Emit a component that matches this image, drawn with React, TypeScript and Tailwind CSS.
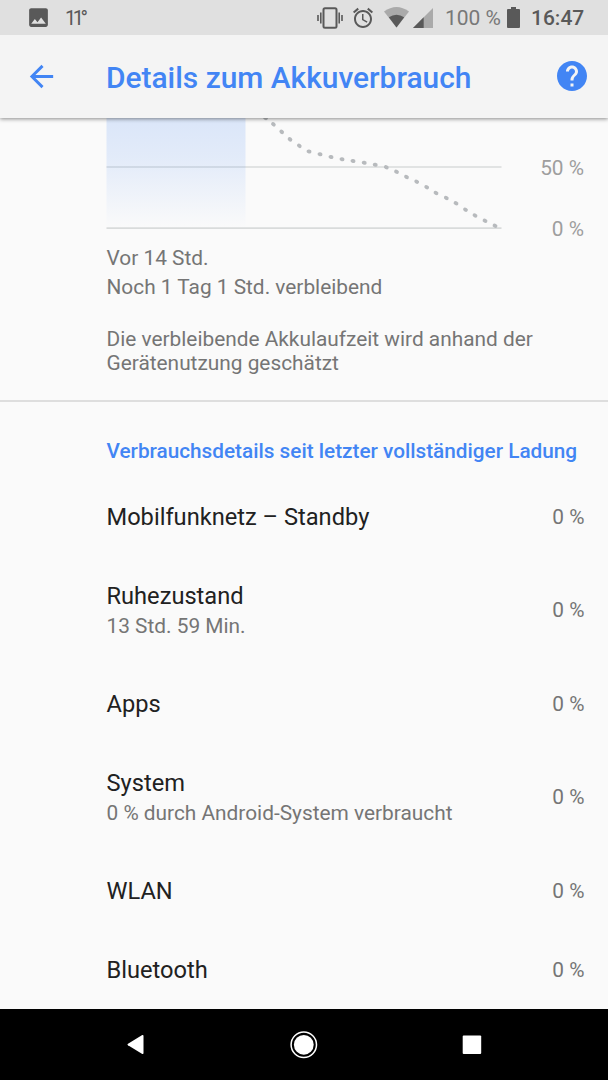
const usage = [
  { name: "Mobilfunknetz – Standby", value: "0 %" },
  { name: "Ruhezustand", detail: "13 Std. 59 Min.", value: "0 %" },
  { name: "Apps", value: "0 %" },
  {
    name: "System",
    detail: "0 % durch Android-System verbraucht",
    value: "0 %",
  },
  { name: "WLAN", value: "0 %" },
  { name: "Bluetooth", value: "0 %" },
];

// projected battery level, in chart pixels
const forecast = [
  [159.5, 0], [167.4, 6.3], [175.7, 13.9], [184, 21.4], [193.3, 27.8],
  [203, 33.5], [214, 36.3], [225, 39], [236, 41.3], [247, 43],
  [258.2, 44.8], [269.2, 46.8], [280.3, 49.3], [290.5, 53.8], [300.5, 59],
  [310.7, 63.7], [320.7, 69.2], [330, 75], [340.3, 80], [350, 85.3],
  [359.5, 91.7], [369, 97.5], [379, 102.8], [389, 107.8],
];

const StatusBar = () => (
  <div className="relative z-20 h-[35px] shrink-0 bg-[#e0e0e0] flex items-center text-[#595959]">
    <svg className="ml-[26px] w-[25px] h-[25px]" viewBox="0 0 24 24" fill="currentColor">
      <path d="M21 19V5c0-1.1-.9-2-2-2H5c-1.1 0-2 .9-2 2v14c0 1.1.9 2 2 2h14c1.1 0 2-.9 2-2zM8.500 13.500l2.500 3.010L14.500 12l4.500 6H5l3.500-4.500z" />
    </svg>
    <span className="ml-[14px] text-[20px] tracking-[-3.500px]">11°</span>
    <div className="ml-auto flex items-center pr-6">
      <svg width="27" height="22" viewBox="0 0 27 22" fill="none" stroke="currentColor">
        <rect x="6.500" y="1.200" width="13" height="19.600" rx="1.500" strokeWidth="2" />
        <path d="M1 8v6M3.800 5.500v11M22.200 5.500v11M25 8v6" strokeWidth="1.600" />
      </svg>
      <svg className="ml-[7px]" width="24" height="24" viewBox="0 0 24 24" fill="currentColor">
        <path d="M22 5.720l-4.600-3.860-1.290 1.530 4.600 3.860L22 5.720zM7.880 3.390L6.600 1.860 2 5.710l1.290 1.530 4.590-3.850zM12.500 8H11v6l4.750 2.850.75-1.230-4-2.370V8zM12 4c-4.970 0-9 4.030-9 9s4.020 9 9 9c4.970 0 9-4.030 9-9s-4.030-9-9-9zm0 16c-3.870 0-7-3.130-7-7s3.130-7 7-7 7 3.130 7 7-3.130 7-7 7z" />
      </svg>
      <svg className="ml-[9px]" width="25" height="21" viewBox="0 0 25 21" fill="currentColor">
        <path d="M0 4.500Q12.500-4.500 25 4.500L12.500 20.500Z" opacity=".4" />
        <path d="M4.800 10.300Q12.500 5 20.200 10.300L12.500 20.500Z" />
      </svg>
      <svg className="ml-[4px]" width="20" height="20" viewBox="0 0 20 20" fill="currentColor">
        <path d="M20 0v20H0Z" opacity=".4" />
        <path d="M10.700 9.300V20H0Z" />
      </svg>
      <span className="ml-[12px] mt-[2px] w-[56px] text-[21px] text-[#787878] whitespace-nowrap">100 %</span>
      <svg className="ml-[6px]" width="13" height="21" viewBox="0 0 13 21" fill="currentColor">
        <path d="M4 0h5v2h3q1 0 1 1v17q0 1-1 1H1q-1 0-1-1V3q0-1 1-1h3Z" />
      </svg>
      <span className="ml-[11px] mt-[2px] w-[53px] text-[21px] font-medium">16:47</span>
    </div>
  </div>
);

const AppBar = () => (
  <header className="relative z-10 h-[83px] shrink-0 bg-[#f4f4f4] shadow-[0_1px_4px_rgba(0,0,0,0.45)] flex items-center text-[#4285f4]">
    <svg className="ml-6 w-[35px] h-[35px]" viewBox="0 0 24 24" fill="currentColor">
      <path d="M20 11H7.830l5.590-5.590L12 4l-8 8 8 8 1.410-1.410L7.830 13H20v-2z" />
    </svg>
    <h1 className="ml-[47px] mt-[4px] text-[29.900px] font-medium whitespace-nowrap">
      Details zum Akkuverbrauch
    </h1>
    <svg className="ml-auto mr-[18px] mb-[1px] w-[36px] h-[36px]" viewBox="0 0 24 24" fill="currentColor">
      <path d="M12 2C6.480 2 2 6.480 2 12s4.480 10 10 10 10-4.480 10-10S17.520 2 12 2zm1 17h-2v-2h2v2zm2.070-7.750l-.9.920C13.450 12.900 13 13.500 13 15h-2v-.5c0-1.100.45-2.100 1.170-2.830l1.240-1.260c.37-.36.59-.86.59-1.410 0-1.100-.9-2-2-2s-2 .9-2 2H8c0-2.210 1.790-4 4-4s4 1.790 4 4c0 .88-.36 1.680-.93 2.250z" />
    </svg>
  </header>
);

const BatteryChart = () => (
  <div className="flex justify-between pl-[106px] pr-6 h-[122px]">
    <svg width="396" height="112" viewBox="0 0 396 112">
      <defs>
        <linearGradient id="level" x1="0" y1="0" x2="0" y2="1">
          <stop offset="0" stopColor="#4285f4" stopOpacity=".17" />
          <stop offset=".35" stopColor="#4285f4" stopOpacity=".13" />
          <stop offset="1" stopColor="#4285f4" stopOpacity="0" />
        </linearGradient>
      </defs>
      <path d="M.5 49H395.500M.5 110.200H395.500" stroke="#d9dbdb" strokeWidth="1.700" />
      <rect x=".5" y="0" width="139" height="110" fill="url(#level)" />
      {forecast.map(([x, y]) => (
        <ellipse
          key={x}
          cx={x}
          cy={y}
          rx="2.500"
          ry="2"
          fill="#b7babd"
          transform={`rotate(${x < 200 ? 40 : x < 280 ? 10 : 28} ${x} ${y})`}
        />
      ))}
    </svg>
    <div className="flex flex-col items-end text-[20.850px] leading-[24px] text-[#9e9e9e] pt-[38px] gap-[37px]">
      <span>50 %</span>
      <span>0 %</span>
    </div>
  </div>
);

const UsageRow = ({
  name,
  detail,
  value,
}: {
  name: string;
  detail?: string;
  value: string;
}) => (
  <li
    className={`flex items-center justify-between pl-[106.5px] pr-[23.5px] ${
      detail ? "h-[108px] pb-[1px]" : "h-[79px]"
    }`}
  >
    <div>
      <p className="text-[23.650px] leading-[31px] text-[#212121]">{name}</p>
      {detail && (
        <p className="text-[20.850px] leading-[28px] text-[#757575]">{detail}</p>
      )}
    </div>
    <span className="pb-[1px] text-[20.850px] leading-[24px] text-[#757575]">{value}</span>
  </li>
);

const NavBar = () => (
  <nav className="h-[71px] shrink-0 bg-black flex justify-center items-center gap-[127px] pr-[1px] text-white">
    <svg width="54" height="28" viewBox="0 0 54 28" fill="currentColor">
      <path d="M2.500 13.200 16.800 4.600Q18 4.200 18 5.500V22.600Q18 24 16.800 23.400L2.500 14.800Q1.200 14 2.500 13.200Z" transform="translate(16.500 -.5)" />
    </svg>
    <svg width="28" height="28" viewBox="0 0 28 28" fill="currentColor">
      <circle cx="13.800" cy="13.800" r="12.700" fill="none" stroke="currentColor" strokeWidth="1.500" />
      <circle cx="13.800" cy="13.800" r="9.900" />
    </svg>
    <svg width="54" height="28" viewBox="0 0 54 28" fill="currentColor">
      <rect x="17.700" y="4.600" width="18.500" height="18.500" rx="1" />
    </svg>
  </nav>
);

export default function App() {
  return (
    <div className="w-full h-[1080px] flex flex-col overflow-hidden bg-[#fafafa] font-[Roboto,sans-serif]">
      <StatusBar />
      <AppBar />
      <main className="h-[891px] shrink-0 overflow-hidden">
        <BatteryChart />
        <section className="h-[162px] pl-[106.5px] pt-[4px] text-[20.850px] text-[#757575] border-b-2 border-[#dedede]">
          <p className="leading-[28px]">Vor 14 Std.</p>
          <p className="leading-[30px]">Noch 1 Tag 1 Std. verbleibend</p>
          <p className="mt-[25px] leading-[24px] w-[440px]">
            Die verbleibende Akkulaufzeit wird anhand der Gerätenutzung geschätzt
          </p>
        </section>
        <h2 className="h-[76px] pt-[37px] pl-[106.5px] text-[20.750px] leading-[24px] font-medium text-[#4285f4] whitespace-nowrap">
          Verbrauchsdetails seit letzter vollständiger Ladung
        </h2>
        <ul>
          {usage.map((item) => (
            <UsageRow key={item.name} {...item} />
          ))}
        </ul>
      </main>
      <NavBar />
    </div>
  );
}
